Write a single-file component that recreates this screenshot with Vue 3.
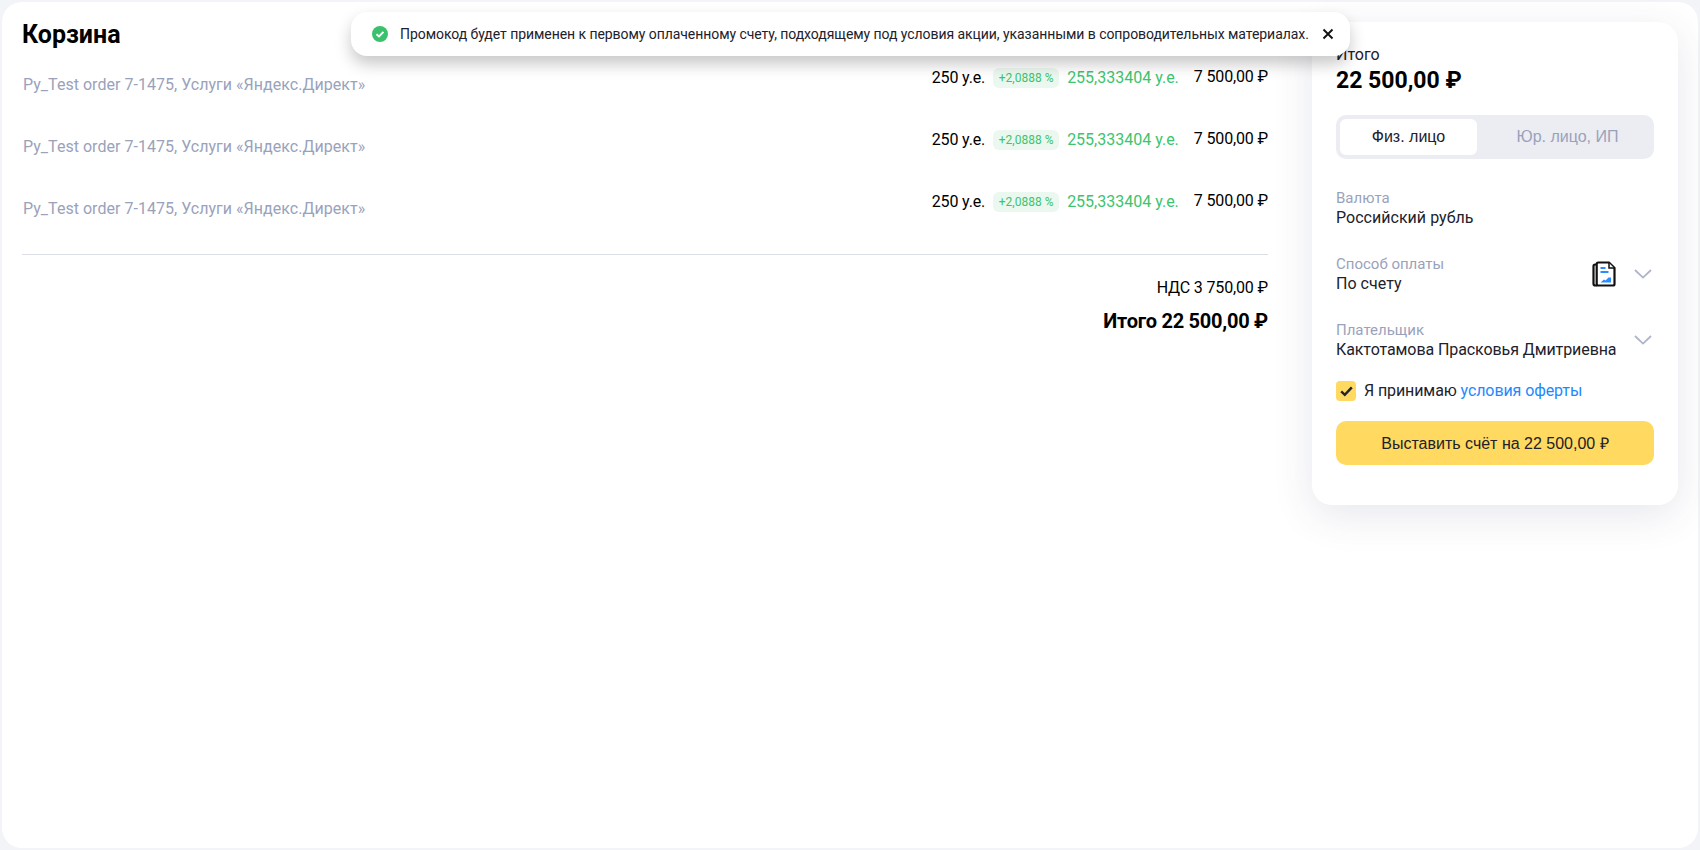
<script setup>
const rows = [1, 2, 3]
</script>

<template>
  <div class="page">
    <div class="panel">
      <main class="cart">
        <h1 class="title">Корзина</h1>
        <ul class="rows">
          <li v-for="r in rows" :key="r" class="row">
            <span class="name">Py_Test order 7-1475, Услуги «Яндекс.Директ»</span>
            <span class="nums">
              <span class="base">250 у.е.</span>
              <span class="badge">+2,0888 %</span>
              <span class="bonus">255,333404 у.е.</span>
              <span class="price">7 500,00 ₽</span>
            </span>
          </li>
        </ul>
        <div class="totals">
          <div class="vat">НДС 3 750,00 ₽</div>
          <div class="sum">Итого 22 500,00 ₽</div>
        </div>
      </main>

      <aside class="card">
        <div class="total-label">Итого</div>
        <div class="total-value">22 500,00 ₽</div>

        <div class="tabs">
          <div class="tab active">Физ. лицо</div>
          <div class="tab other">Юр. лицо, ИП</div>
        </div>

        <div class="field">
          <div class="field-text">
            <div class="label">Валюта</div>
            <div class="value">Российский рубль</div>
          </div>
        </div>

        <div class="field">
          <div class="field-text">
            <div class="label">Способ оплаты</div>
            <div class="value">По счету</div>
          </div>
          <svg class="doc" width="24" height="26" viewBox="0 0 24 26" fill="none">
            <path d="M5 3.5H3.2C2 3.5 1.5 4.2 1.5 5.2V22.8C1.5 23.8 2 24.5 3.2 24.5H5" stroke="#111" stroke-width="2.2"/>
            <path d="M6.2 1.5H17L22.5 7V23C22.5 24 22 24.5 21 24.5H6.2C5.2 24.5 4.7 24 4.7 23V3C4.7 2 5.2 1.5 6.2 1.5Z" fill="#fff" stroke="#111" stroke-width="2.2"/>
            <path d="M17 2V7H22" fill="#fff" stroke="#111" stroke-width="1.5"/>
            <path d="M8.5 7H13.5M8.5 11H16.5" stroke="#2a8cff" stroke-width="2.2"/>
            <path d="M8.5 21.5L12 18.5L13.5 19.5L16.5 16.5H19V21.5Z" fill="#2a8cff"/>
          </svg>
          <svg class="chev" width="18" height="10" viewBox="0 0 18 10" fill="none">
            <path d="M1 1L9 8.6L17 1" stroke="#aeb5ca" stroke-width="1.8"/>
          </svg>
        </div>

        <div class="field">
          <div class="field-text">
            <div class="label">Плательщик</div>
            <div class="value payer">Кактотамова Прасковья Дмитриевна</div>
          </div>
          <svg class="chev" width="18" height="10" viewBox="0 0 18 10" fill="none">
            <path d="M1 1L9 8.6L17 1" stroke="#aeb5ca" stroke-width="1.8"/>
          </svg>
        </div>

        <div class="accept">
          <span class="check">
            <svg width="13" height="11" viewBox="0 0 13 11" fill="none">
              <path d="M1.2 5.4L4.8 8.8L11.8 1.4" stroke="#23232b" stroke-width="2.5"/>
            </svg>
          </span>
          <span class="accept-text">Я принимаю <a class="link">условия оферты</a></span>
        </div>

        <button class="pay">Выставить счёт на 22 500,00 ₽</button>
      </aside>

      <div class="toast">
        <svg class="ok" width="16" height="16" viewBox="0 0 16 16">
          <circle cx="8" cy="8" r="8" fill="#3bc16e"/>
          <path d="M4.5 8.2L7 10.5L11.5 5.8" fill="none" stroke="#fff" stroke-width="1.9"/>
        </svg>
        <span class="toast-text">Промокод будет применен к первому оплаченному счету, подходящему под условия акции, указанными в сопроводительных материалах.</span>
        <svg class="close" width="12" height="12" viewBox="0 0 12 12">
          <path d="M1.5 1.5L10.5 10.5M10.5 1.5L1.5 10.5" stroke="#111" stroke-width="1.9"/>
        </svg>
      </div>
    </div>
  </div>
</template>

<style>
html, body { margin: 0; background: #f3f4f7; }
</style>

<style scoped>
.page {
  width: 1700px;
  height: 850px;
  padding: 2px;
  box-sizing: border-box;
  font-family: Roboto, "Noto Sans", sans-serif;
  color: #21212b;
}
.panel {
  position: relative;
  height: 100%;
  background: #fff;
  border-radius: 20px;
  display: flex;
  align-items: flex-start;
  padding: 20px 20px 0 20px;
  box-sizing: border-box;
  gap: 44px;
}
.cart { width: 1246px; flex: none; }
.title {
  margin: 0;
  padding-top: 1px;
  font-size: 25px;
  line-height: 24px;
  font-weight: 700;
  color: #000;
  height: 38px;
}
.rows { list-style: none; margin: 0; padding: 0 0 7px; border-bottom: 1px solid #dcdee6; }
.row {
  height: 62px;
  display: flex;
  justify-content: space-between;
  align-items: flex-start;
}
.name { font-size: 16px; line-height: 20px; color: #9aa2bb; padding: 14px 0 0 1px; letter-spacing: 0.03px; }
.nums { display: flex; align-items: center; font-size: 16px; line-height: 20px; padding-top: 7px; }
.base { color: #000; letter-spacing: -0.15px; }
.badge {
  margin-left: 8px;
  height: 20px;
  width: 66px;
  background: #ebf8ef;
  border-radius: 6px;
  color: #3cc46e;
  font-size: 12px;
  line-height: 20px;
  text-align: center;
}
.bonus { color: #3cc46e; margin-left: 8px; }
.price { color: #000; margin-left: 15px; margin-top: -2px; letter-spacing: -0.15px; }
.totals { text-align: right; color: #000; padding-top: 22px; }
.vat { font-size: 16px; line-height: 22px; letter-spacing: -0.15px; }
.sum { font-size: 20px; line-height: 24px; font-weight: 700; margin-top: 10px; letter-spacing: -0.25px; }

.card {
  width: 366px;
  height: 483px;
  flex: none;
  box-sizing: border-box;
  background: #fff;
  border-radius: 20px;
  padding: 23px 24px 24px;
  box-shadow: 0 10px 40px rgba(50, 60, 110, 0.12);
}
.total-label { font-size: 16px; line-height: 20px; color: #21212b; }
.total-value { font-size: 23px; line-height: 32px; font-weight: 700; color: #000; }
.tabs {
  margin-top: 18px;
  height: 44px;
  background: #ebedf2;
  border-radius: 10px;
  padding: 4px;
  box-sizing: border-box;
  display: flex;
  font-family: "Liberation Sans", Arial, sans-serif;
  font-size: 16px;
}
.tab {
  display: flex;
  align-items: center;
  justify-content: center;
  color: #9aa2bb;
  border-radius: 6px;
}
.tab.active { background: #fff; color: #21212b; flex: none; width: 137px; }
.tab.other { flex: 1; padding-left: 8px; }
.field {
  margin-top: 30px;
  height: 38px;
  display: flex;
  align-items: center;
  white-space: nowrap;
}
.field + .field { margin-top: 28px; }
.field-text { flex: 1; min-width: 0; }
.label { font-size: 15px; line-height: 19px; color: #9aa2bb; }
.value { font-size: 16px; line-height: 20px; color: #21212b; letter-spacing: 0.03px; }
.payer { letter-spacing: -0.09px; }
.doc { flex: none; margin-right: 18px; }
.chev { flex: none; margin-right: 2px; }
.accept {
  margin-top: 22px;
  display: flex;
  align-items: center;
  gap: 8px;
  font-size: 16px;
  line-height: 20px;
}
.accept-text { letter-spacing: -0.1px; }
.check {
  width: 20px;
  height: 20px;
  background: #ffd960;
  border-radius: 4px;
  display: flex;
  align-items: center;
  justify-content: center;
}
.link { color: #1e88ff; }
.pay {
  display: block;
  margin-top: 20px;
  width: 100%;
  height: 44px;
  border: 0;
  border-radius: 10px;
  background: #ffd960;
  color: #21212b;
  font-family: "Liberation Sans", Arial, sans-serif;
  font-size: 16px;
}
.toast {
  position: absolute;
  left: 349px;
  top: 10px;
  width: 999px;
  height: 44px;
  box-sizing: border-box;
  background: #fff;
  border-radius: 16px;
  box-shadow: 0 8px 16px rgba(0, 0, 0, 0.22);
  display: flex;
  align-items: center;
  padding-left: 21px;
  font-size: 14px;
  white-space: nowrap;
}
.ok { flex: none; }
.toast-text { margin-left: 12px; color: #21212b; letter-spacing: -0.06px; }
.close { flex: none; margin-left: auto; margin-right: 16px; }
</style>
